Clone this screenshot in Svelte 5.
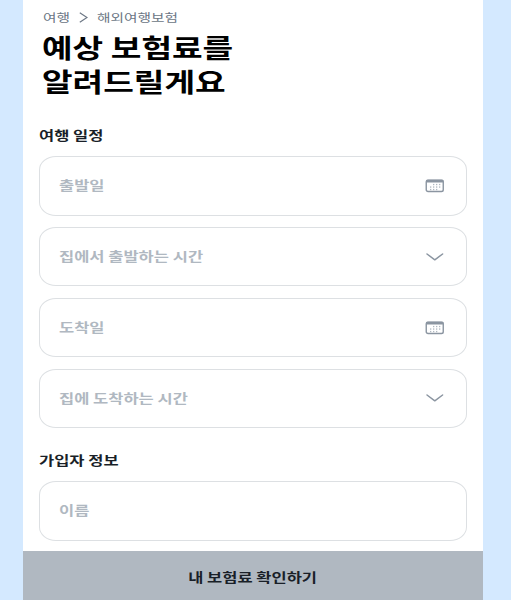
<script>
    const schedule = [
        { label: '출발일', icon: 'calendar' },
        { label: '집에서 출발하는 시간', icon: 'arrow' },
        { label: '도착일', icon: 'calendar' },
        { label: '집에 도착하는 시간', icon: 'arrow' }
    ];

    // dots inside the calendar icon, the first cell stays empty
    const dots = [
        [8, 5.5], [11, 5.5], [14, 5.5],
        [5, 8], [8, 8], [11, 8], [14, 8],
        [5, 10.5], [8, 10.5], [11, 10.5]
    ];
</script>

<main>
    <div class="content">
        <nav>
            <span class="wide">여행</span>
            <svg class="crumb" width="9" height="11" viewBox="0 0 9 11">
                <path d="M0.8 0.8 L8 5.5 L0.8 10.2" />
            </svg>
            <span class="wide">해외여행보험</span>
        </nav>
        <h1>
            <span class="wide">예상 보험료를</span>
            <span class="wide">알려드릴게요</span>
        </h1>

        <section>
            <h2><span class="wide">여행 일정</span></h2>
            {#each schedule as field}
                <div class="field">
                    <span class="wide">{field.label}</span>
                    {#if field.icon === 'calendar'}
                        <svg width="20" height="14" viewBox="0 0 20 14">
                            <rect class="frame" x="1.25" y="1.25" width="17" height="11.2" rx="1.8" />
                            <rect class="top" x="1" y="0.8" width="17.5" height="2.6" rx="1" />
                            {#each dots as [x, y]}
                                <rect class="dot" {x} y={y - 0.6} width="1.3" height="1.3" />
                            {/each}
                        </svg>
                    {:else}
                        <svg width="20" height="14" viewBox="0 0 20 14">
                            <path class="arrow" d="M2 4 L9.8 9.8 L17.6 4" />
                        </svg>
                    {/if}
                </div>
            {/each}
        </section>

        <section class="person">
            <h2><span class="wide">가입자 정보</span></h2>
            <div class="field">
                <span class="wide">이름</span>
            </div>
        </section>
    </div>
    <button><span>내 보험료 확인하기</span></button>
</main>

<style>
    :global(body) {
        margin: 0;
        background: #d4e9ff;
    }

    main {
        display: flex;
        flex-direction: column;
        width: 460px;
        height: 600px;
        margin-left: 23px;
        overflow: hidden;
        background: #ffffff;
        font-family: "Noto Sans CJK KR", sans-serif;
    }

    .content {
        flex: 1;
        min-height: 0;
        padding: 0 16px;
    }

    .wide {
        display: inline-block;
        transform: scaleX(1.3);
        transform-origin: left center;
        white-space: nowrap;
    }

    nav {
        display: flex;
        align-items: center;
        height: 30px;
        padding: 4px 0 0 3.5px;
        box-sizing: border-box;
        font-size: 11.3px;
        color: #6b7684;
    }

    .crumb {
        margin: 1px 9px 0 16px;
        fill: none;
        stroke: #6b7684;
        stroke-width: 1.2;
    }

    h1 {
        display: flex;
        flex-direction: column;
        align-items: flex-start;
        margin: 0 0 0 3px;
        height: 94px;
        font-size: 25.6px;
        line-height: 34px;
        font-weight: 700;
        color: #000000;
    }

    h2 {
        height: 32px;
        margin: 0;
        font-size: 12.7px;
        line-height: 21px;
        font-weight: 700;
        color: #191f28;
    }

    .field {
        display: flex;
        align-items: center;
        justify-content: space-between;
        box-sizing: border-box;
        height: 59.5px;
        margin-bottom: 11.4px;
        padding: 0 21px 0 19px;
        border: 1px solid #dde0e3;
        border-radius: 17px / 14px;
        font-size: 12.7px;
        font-weight: 700;
        color: #b0b8c1;
    }

    .field .wide {
        margin-top: -2px;
    }

    .person {
        padding-top: 9.5px;
    }

    .frame {
        fill: none;
        stroke: #8b95a1;
        stroke-width: 1.4;
    }

    .top {
        fill: #8b95a1;
    }

    .dot {
        fill: #b0b8c1;
    }

    .arrow {
        fill: none;
        stroke: #8b95a1;
        stroke-width: 1.5;
        stroke-linecap: round;
        stroke-linejoin: round;
    }

    button {
        flex: none;
        height: 49px;
        padding: 2px 0 0;
        border: none;
        background: #b0b8c1;
        font-family: inherit;
        font-size: 12.7px;
        font-weight: 700;
        color: #191f28;
    }

    button span {
        display: inline-block;
        transform: scaleX(1.3);
    }
</style>
